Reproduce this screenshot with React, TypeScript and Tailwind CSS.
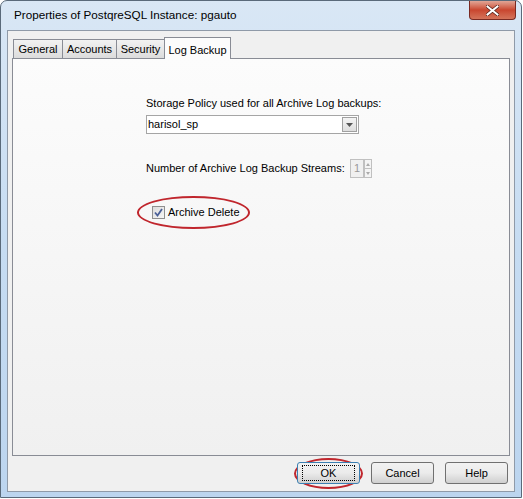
import React from 'react';

const font = { fontFamily: '"Liberation Sans", Arial, sans-serif' };

const Tab: React.FC<{ label: string; active?: boolean; w: string }> = ({ label, active, w }) =>
  active ? (
    <div className={`${w} h-[22px] -mb-px relative z-10 border border-b-0 border-[#898c95] bg-[#fcfcfc] flex items-start justify-center pt-[4px] text-[11px] text-black`}>
      {label}
    </div>
  ) : (
    <div className={`${w} h-[19px] border border-b-0 border-[#898c95] bg-gradient-to-b from-[#f2f2f2] to-[#dcdcdc] flex items-center justify-center text-[11px] text-black -mr-px`}>
      {label}
    </div>
  );

const Button: React.FC<{ label: string; focused?: boolean }> = ({ label, focused }) => (
  <div
    className={`w-[63px] h-[22px] rounded-[3px] border ${focused ? 'border-[#3c7fb1]' : 'border-[#707070]'} bg-gradient-to-b from-[#f2f2f2] via-[#ebebeb] to-[#cfcfcf] flex items-center justify-center text-[11px] text-black`}
  >
    <span className={focused ? 'px-[18px] border border-dotted border-black leading-[14px]' : ''}>{label}</span>
  </div>
);

const App: React.FC = () => {
  return (
    <div className="w-[523px] h-[499px] bg-white" style={font}>
      <div className="w-[522px] h-[498px] rounded-t-[7px] border border-[#5a6a7a] bg-gradient-to-b from-[#d9e7f5] via-[#c6dcf2] to-[#bcd5ef] flex flex-col relative">
        {/* Title bar */}
        <div className="h-[29px] flex items-center pl-[13px] pb-[2px]">
          <span className="text-[11.7px] text-black">Properties of PostqreSQL Instance: pgauto</span>
        </div>
        <div className="absolute top-0 right-[5px] w-[47px] h-[19px] rounded-b-[4px] border border-t-0 border-[#7a2a22] bg-gradient-to-b from-[#e0a596] via-[#c9462f] to-[#d4735a] flex items-center justify-center">
          <svg width="13" height="11" viewBox="0 0 13 11">
            <path d="M1.5 1.5 L11.5 9.5 M11.5 1.5 L1.5 9.5" stroke="#4a1a14" strokeWidth="3.4" strokeLinecap="square" />
            <path d="M1.5 1.5 L11.5 9.5 M11.5 1.5 L1.5 9.5" stroke="#ffffff" strokeWidth="2" strokeLinecap="square" />
          </svg>
        </div>

        {/* Client area */}
        <div className="mx-[6px] h-[462px] border border-[#8f9aa8] bg-[#f0f0f0] flex flex-col">
          <div className="pl-[4px] pt-[5px] pr-[4px]">
            <div className="flex items-end h-[22px] pl-px">
              <Tab label="General" w="w-[50px]" />
              <Tab label="Accounts" w="w-[55px]" />
              <Tab label="Security" w="w-[49px]" />
              <Tab label="Log Backup" w="w-[67px]" active />
            </div>
            <div className="h-[398px] border border-[#898c95] bg-gradient-to-b from-[#fcfcfc] to-[#f0f0f0] pt-[37px] pl-[133px]">
              <div className="text-[11px] text-black leading-[14px]">Storage Policy used for all Archive Log backups:</div>
              <div className="mt-[5px] w-[213px] h-[19px] border border-[#a5a5a5] bg-white flex items-center">
                <span className="flex-1 text-[11px] text-black pl-[1px]">harisol_sp</span>
                <div className="w-[15px] h-[15px] mr-px border border-[#a0a0a0] bg-gradient-to-b from-[#f4f4f4] to-[#dedede] flex items-center justify-center">
                  <svg width="7" height="4" viewBox="0 0 7 4"><path d="M0 0 H7 L3.5 4 Z" fill="#555" /></svg>
                </div>
              </div>
              <div className="mt-[25px] flex items-center h-[19px]">
                <span className="text-[11px] text-black w-[204px] whitespace-nowrap">Number of Archive Log Backup Streams:</span>
                <div className="w-[14px] h-[19px] border border-[#c0c0c0] bg-[#f0f0f0] flex items-center justify-center text-[11px] text-[#999]">1</div>
                <div className="flex flex-col w-[8px] h-[19px]">
                  <div className="flex-1 border border-[#c0c0c0] bg-[#f4f4f4] flex items-center justify-center">
                    <svg width="4" height="3" viewBox="0 0 4 3"><path d="M0 3 H4 L2 0 Z" fill="#aaa" /></svg>
                  </div>
                  <div className="flex-1 border border-t-0 border-[#c0c0c0] bg-[#f4f4f4] flex items-center justify-center">
                    <svg width="4" height="3" viewBox="0 0 4 3"><path d="M0 0 H4 L2 3 Z" fill="#aaa" /></svg>
                  </div>
                </div>
              </div>
              <div className="mt-[18px] ml-[-9px] w-[113px] h-[33px] rounded-[50%] border-2 border-[#c0262d] flex items-center pl-[13px] gap-[3px]">
                <div className="w-[13px] h-[13px] border border-[#8f8f8f] bg-gradient-to-br from-[#dcdcdc] to-[#f6f6f6] flex items-center justify-center">
                  <svg width="9" height="9" viewBox="0 0 9 9"><path d="M1 4.5 L3.5 7.5 L8 1" stroke="#4a5f97" strokeWidth="1.8" fill="none" /></svg>
                </div>
                <span className="text-[11px] text-black">Archive Delete</span>
              </div>
            </div>
          </div>
          <div className="flex-1 flex items-center justify-end gap-[11px] pr-[6px] pb-[1px]">
            <div className="w-[69px] h-[31px] rounded-[50%] border-2 border-[#c0262d] flex items-center justify-center mr-[-3px]">
              <Button label="OK" focused />
            </div>
            <Button label="Cancel" />
            <Button label="Help" />
          </div>
        </div>
      </div>
    </div>
  );
};

export default App;
